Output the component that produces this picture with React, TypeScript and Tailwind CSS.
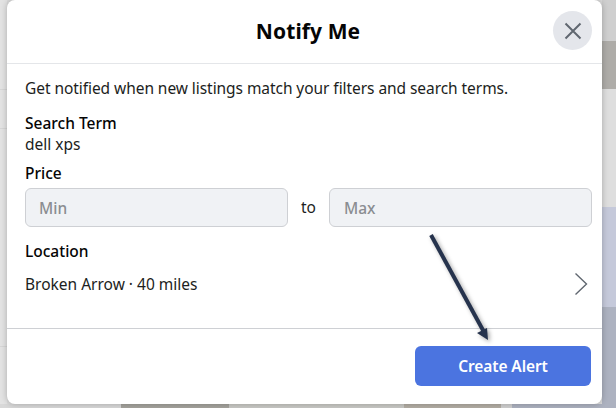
import React from "react";

const font = { fontFamily: '"Noto Sans", "Open Sans", sans-serif' };

function Backdrop() {
  return (
    <div className="absolute inset-0 flex flex-col bg-[#dcdcdc]">
      <div className="flex-1 flex justify-between">
        <div className="w-[7px] flex flex-col">
          <div className="h-[90px] bg-[#e3e3e3] border-b border-[#d6d6d6]" />
          <div className="h-[39px] bg-[#e3e3e3] border-b border-[#d6d6d6]" />
          <div className="h-[218px] bg-[#e3e3e3] border-b border-[#d6d6d6]" />
          <div className="flex-1 bg-[#e3e3e3]" />
        </div>
        <div className="w-[14px] flex flex-col">
          <div className="h-[41px] bg-[#cfcfcf]" />
          <div className="h-[48px] bg-[#aeaca8]" />
          <div className="h-[118px] bg-[#dedede]" />
          <div className="h-[100px] bg-[#c5c9da]" />
          <div className="flex-1 bg-[#adb2c0]" />
        </div>
      </div>
      <div className="h-[4px] flex">
        <div className="w-[121px] bg-[#d8d8d8]" />
        <div className="w-[108px] bg-[#a5a39d]" />
        <div className="w-[175px] bg-[#c9c9c5]" />
        <div className="w-[97px] bg-[#b3aea4]" />
        <div className="w-[11px] bg-[#d0d0d0]" />
        <div className="flex-1 bg-[#adb2c0]" />
      </div>
    </div>
  );
}

export default function App() {
  return (
    <div className="relative w-[616px] h-[408px] overflow-hidden" style={font}>
      <Backdrop />
      <div className="absolute left-[7px] top-0 w-[595px] h-[404px] bg-white rounded-lg shadow-[0_0_6px_rgba(0,0,0,0.25)] flex flex-col text-[#1c1e21]">
        <div className="h-[64px] shrink-0 relative flex items-center justify-center border-b border-[#e4e6e9] pl-[7px]">
          <h1 className="text-[21px] font-bold tracking-[0.1px] text-[#050505]">Notify Me</h1>
          <button className="absolute right-[10px] top-[11px] w-[39px] h-[39px] rounded-full bg-[#e4e6eb] flex items-center justify-center">
            <svg width="20" height="20" viewBox="0 0 20 20" fill="none" stroke="#606770" strokeWidth="2">
              <path d="M2.5 2.5 L17.5 17.5 M17.5 2.5 L2.5 17.5" />
            </svg>
          </button>
        </div>
        <div className="flex-1 pl-[18px] pr-[10px] pt-[14px] flex flex-col min-h-0 text-[15.5px]">
          <p className="leading-[21px] tracking-[-0.06px]">Get notified when new listings match your filters and search terms.</p>
          <p className="mt-[14px] leading-[20px] font-medium text-[#050505]">Search Term</p>
          <p className="leading-[21px] mt-[1px]">dell xps</p>
          <p className="mt-[8px] leading-[20px] font-medium text-[#050505]">Price</p>
          <div className="mt-[5px] flex items-center">
            <div className="w-[263px] h-[39px] rounded-md bg-[#f0f2f5] border border-[#ced0d4] flex items-center pl-[13px] pt-[2px] font-medium text-[#8a8d91]">Min</div>
            <span className="w-[41px] text-center">to</span>
            <div className="w-[263px] h-[39px] rounded-md bg-[#f0f2f5] border border-[#ced0d4] flex items-center pl-[14px] pt-[2px] font-medium text-[#8a8d91]">Max</div>
          </div>
          <p className="mt-[14px] leading-[20px] font-medium text-[#050505]">Location</p>
          <div className="mt-[11px] flex items-center justify-between">
            <span className="leading-[20px]">Broken Arrow · 40 miles</span>
            <svg width="14" height="24" viewBox="0 0 14 24" fill="none" stroke="#606770" strokeWidth="1.4" className="mr-[4px]">
              <path d="M1.5 1.5 L12.5 12 L1.5 22.5" />
            </svg>
          </div>
        </div>
        <div className="h-[76px] shrink-0 border-t border-[#ced0d4] flex items-start justify-end pt-[17px] pr-[11px]">
          <button className="w-[176px] h-[40px] pt-[2px] rounded-md bg-[#4b74e0] text-white text-[15.5px] font-semibold tracking-[-0.1px]">Create Alert</button>
        </div>
      </div>
      <svg className="absolute left-[425px] top-[230px] drop-shadow-[2px_2px_2px_rgba(0,0,0,0.35)]" width="70" height="115" viewBox="0 0 70 115" fill="none">
        <path d="M6 5 L59 102" stroke="#26334d" strokeWidth="4" />
        <path d="M63 110 L52 103 L62 98 Z" fill="#26334d" />
      </svg>
    </div>
  );
}
